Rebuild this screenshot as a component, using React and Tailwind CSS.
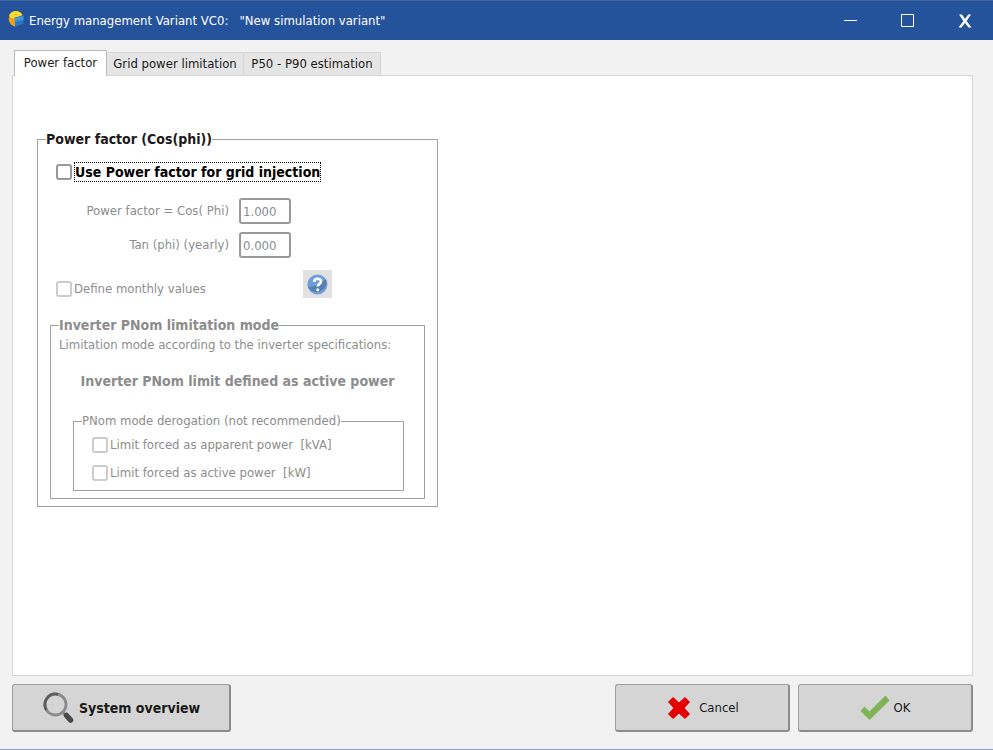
import { useState } from 'react'

const TABS = ['Power factor', 'Grid power limitation', 'P50 - P90 estimation']

function AppIcon() {
  return (
    <svg className="w-4 h-4" viewBox="0 0 16 16" aria-hidden="true">
      <path d="M14.500 4A7.500 7.500 0 1 0 7 15.500L8 7Z" fill="#f5a010" />
      <path d="M14.500 4A7.500 7.500 0 0 0 1 4.500c2 3 4 3.500 6 2.500Z" fill="#ffd92e" />
      <path d="M6.500 6.500 15.800 4.500 15.300 12.500 7.200 15.800Z" fill="#2a78c0" />
      <path d="M7 7 15.500 5.200 15.300 9 7 11Z" fill="#4c9fd8" />
      <path d="M9.700 6v9M12.700 5.300v9M7 10l8.500-2M7 13l8.500-2.500" stroke="#2f78b8" strokeWidth="0.4" />
    </svg>
  )
}

function TitleBar({ children }) {
  return (
    <header className="flex items-center h-10 pl-2 pr-3.5 bg-[#25539b] border-t border-[#46669a] text-white">
      <div className="flex flex-1 items-center gap-[5px] pb-1">
        <AppIcon />
        <h1 className="pt-1 whitespace-pre">{children}</h1>
      </div>
      <div className="flex items-center gap-7">
        <button aria-label="Minimize" className="w-[29px] h-6 flex items-center justify-center">
          <svg width="13" height="13" viewBox="0 0 13 13"><path d="M0 6.5h13" stroke="#fff" /></svg>
        </button>
        <button aria-label="Maximize" className="w-[29px] h-6 flex items-center justify-center">
          <svg width="13" height="13" viewBox="0 0 13 13" fill="none"><path d="M.5.5h12v12H.5z" stroke="#fff" /></svg>
        </button>
        <button aria-label="Close" className="w-[29px] h-6 flex items-center justify-center">
          <svg width="14" height="14" viewBox="0 0 14 14">
            <path d="M1 .5h3L7 5 10.200.5H13L8.600 7 13.500 13.500h-3L7 9 3.500 13.500H.5L5.400 7Z" fill="#fff" />
          </svg>
        </button>
      </div>
    </header>
  )
}

function Tabs({ active, onSelect }) {
  return (
    <div role="tablist" className="flex items-end h-[26px] pl-0.5 -mb-px relative">
      {TABS.map((tab) => (
        <button
          key={tab}
          role="tab"
          aria-selected={tab === active}
          onClick={() => onSelect(tab)}
          className={
            tab === active
              ? 'h-[26px] min-w-[93px] px-1.5 pb-0.5 bg-white border border-b-0 border-[#b9b9b9]'
              : 'h-6 min-w-[137px] px-1.5 bg-[#e5e5e5] border border-l-0 border-[#d5d5d5]'
          }
        >
          {tab}
        </button>
      ))}
    </div>
  )
}

function Group({ title, bold, className, children }) {
  return (
    <fieldset className={`border border-[#a0a0a0] ${className}`}>
      <legend className={bold ? 'ml-2 h-[18px] font-bold text-[14px] leading-[18px]' : 'ml-2 h-[18px]'}>{title}</legend>
      {children}
    </fieldset>
  )
}

function Check({ label, checked, onChange, disabled, strong }) {
  return (
    <label className="flex items-center gap-0.5 whitespace-pre">
      <input
        type="checkbox"
        checked={checked}
        onChange={onChange}
        disabled={disabled}
        className={`appearance-none w-4 h-4 rounded-[3px] border-2 bg-white checked:bg-[#25539b] ${
          strong ? 'border-[#999999]' : 'border-[#cccccc]'
        }`}
      />
      <span className={strong ? 'font-bold text-[14px] leading-[18px] text-black border border-dotted border-black' : ''}>
        {label}
      </span>
    </label>
  )
}

function Field({ id, label, value }) {
  return (
    <div className="flex items-center justify-end gap-2.5">
      <label htmlFor={id}>{label}</label>
      <input
        id={id}
        defaultValue={value}
        disabled
        className="w-[52px] h-[26px] px-0.5 bg-white border-2 border-[#999999] rounded-[3px]"
      />
    </div>
  )
}

function HelpButton() {
  return (
    <button aria-label="Help" className="w-[29px] h-7 flex items-center justify-center bg-[#e1e1e1]">
      <svg width="21" height="21" viewBox="0 0 21 21">
        <circle cx="10.5" cy="10.5" r="10" fill="#6f9fd8" />
        <path d="M.8 13C7 13 14 10 19 5a10 10 0 0 1-18.200 8Z" fill="#557fb0" />
        <path
          d="M7.200 8c0-2.300 1.400-3.300 3.400-3.300S14 5.700 14 7.500c0 2.600-3.300 2.600-3.300 5"
          fill="none"
          stroke="#fff"
          strokeWidth="2.600"
        />
        <circle cx="10.700" cy="15.700" r="1.500" fill="#fff" />
      </svg>
    </button>
  )
}

function ActionButton({ icon, children, className }) {
  return (
    <button
      className={`flex items-center h-12 bg-[#d5d5d5] border border-[#a0a0a0] border-r-2 border-b-2 border-r-[#8c8c8c] border-b-[#8c8c8c] rounded-[3px] ${className}`}
    >
      {icon}
      {children}
    </button>
  )
}

function SearchIcon() {
  return (
    <svg width="32" height="32" viewBox="0 0 32 32" fill="none">
      <circle cx="12.500" cy="12.500" r="10.500" stroke="#8b8b8b" strokeWidth="2.800" />
      <path d="M3.500 18A10.500 10.500 0 0 1 15 2.300" stroke="#5e5e5e" strokeWidth="2.800" />
      <path d="m20 20.500 3 3" stroke="#7b9299" strokeWidth="3" />
      <path d="m23.500 23.500 4 4.500" stroke="#484848" strokeWidth="5.500" strokeLinecap="round" />
    </svg>
  )
}

function CancelIcon() {
  return (
    <svg width="24" height="24" viewBox="0 0 24 24">
      <path
        d="M6 1.500 12 7 18 1.500 22.500 6 17 12 22.500 18 18 22.500 12 17 6 22.500 1.500 18 7 12 1.500 6Z"
        fill="#e50000"
        stroke="#e50000"
        strokeWidth="1"
        strokeLinejoin="round"
      />
    </svg>
  )
}

function OkIcon() {
  return (
    <svg width="30" height="26" viewBox="0 0 30 26">
      <path d="M.5 16 4.500 11.500 9.500 16.500 25.500.5 29.500 5.500 9.500 25Z" fill="#7fb354" />
    </svg>
  )
}

export default function App() {
  const [tab, setTab] = useState(TABS[0])
  const [usePf, setUsePf] = useState(false)

  return (
    <div className="min-h-screen flex flex-col bg-[#f2f2f2] border-b border-[#7f9fcf] font-['DejaVu_Sans_Condensed','DejaVu_Sans',sans-serif] text-[13px] leading-[18px] text-[#1a1a1a]">
      <TitleBar>{'Energy management Variant VC0:   "New simulation variant"'}</TitleBar>

      <main className="flex-1 flex flex-col pt-2.5 pl-3 pr-5">
        <Tabs active={tab} onSelect={setTab} />
        <div role="tabpanel" className="flex-1 pt-[54px] pl-6 bg-white border border-[#d5d5d5]">
          <Group title="Power factor (Cos(phi))" bold className="w-[401px] pb-[7px]">
            <div className="flex items-center h-6 mt-3 pl-[18px]">
              <Check
                strong
                label="Use Power factor for grid injection"
                checked={usePf}
                onChange={(e) => setUsePf(e.target.checked)}
              />
            </div>

            <div className="px-3 text-[#8c8c8c]">
              <div className="flex flex-col gap-2 w-[241px] mt-3.5">
                <Field id="cosphi" label="Power factor = Cos( Phi)" value="1.000" />
                <Field id="tanphi" label="Tan (phi) (yearly)" value="0.000" />
              </div>

              <div className="flex items-end justify-between w-[282px] pl-1.5 mt-3">
                <Check label="Define monthly values" disabled />
                <HelpButton />
              </div>

              <Group title="Inverter PNom limitation mode" bold className="mt-[18px] pt-0.5 pb-[7px]">
                <p className="pl-2">Limitation mode according to the inverter specifications:</p>
                <p className="mt-[18px] text-center font-bold text-[14px] leading-[18px]">
                  Inverter PNom limit defined as active power
                </p>
                <Group title="PNom mode derogation (not recommended)" className="mt-[22px] ml-[22px] mr-5 pt-1.5 pb-2">
                  <div className="flex flex-col gap-2.5 pl-[18px]">
                    <Check label="Limit forced as apparent power  [kVA]" disabled />
                    <Check label="Limit forced as active power  [kW]" disabled />
                  </div>
                </Group>
              </Group>
            </div>
          </Group>
        </div>
      </main>

      <footer className="flex items-center gap-2 pt-2 pb-[17px] pl-3 pr-5">
        <ActionButton icon={<SearchIcon />} className="w-[219px] gap-1 pl-[30px] mr-auto font-bold text-[14px]">
          System overview
        </ActionButton>
        <ActionButton icon={<CancelIcon />} className="w-[175px] gap-2 pl-0.5 justify-center">
          Cancel
        </ActionButton>
        <ActionButton icon={<OkIcon />} className="w-[175px] gap-1 justify-center">
          OK
        </ActionButton>
      </footer>
    </div>
  )
}
